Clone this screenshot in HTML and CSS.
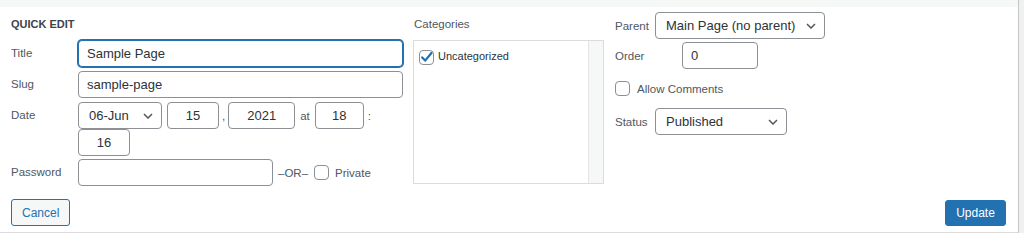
FILE: index.html
```html
<!DOCTYPE html>
<html lang="en">
<head>
  <meta charset="UTF-8">
  <title>Quick Edit</title>
  <link rel="stylesheet" href="styles.css">
</head>
<body>

  <div class="list-table">
    <div class="prev-row"></div>

    <!-- Quick edit row -->
    <div class="quick-edit">
      <div class="columns">

        <div class="col col-left">
          <div class="legend">Quick Edit</div>
          <div class="field">
            <span class="label">Title</span>
            <input type="text" class="text w-full focused" value="Sample Page">
          </div>
          <div class="field">
            <span class="label">Slug</span>
            <input type="text" class="text w-full" value="sample-page">
          </div>
          <div class="field field-date">
            <span class="label">Date</span>
            <div class="date">
              <select class="select sel-month"><option>06-Jun</option></select>
              <input type="text" class="text num w-day" value="15"><span class="sep comma">,</span>
              <input type="text" class="text num w-year" value="2021"><span class="sep at">at</span>
              <input type="text" class="text num w-hour" value="18"><span class="sep colon">:</span>
              <input type="text" class="text num w-min" value="16">
            </div>
          </div>
          <div class="field">
            <span class="label">Password</span>
            <div class="pass">
              <input type="text" class="text w-pass" value="">
              <span class="sep or">–OR–</span>
              <label class="check"><input type="checkbox" class="cb"><span>Private</span></label>
            </div>
          </div>
        </div>

        <div class="col col-mid">
          <div class="cat-title">Categories</div>
          <div class="cat-box">
            <ul class="cat-list">
              <li><label class="check cat-item"><input type="checkbox" class="cb" checked><span>Uncategorized</span></label></li>
            </ul>
            <div class="scroll-track"></div>
          </div>
        </div>

        <div class="col col-right">
          <div class="rfield">
            <span class="rlabel">Parent</span>
            <select class="select sel-parent"><option>Main Page (no parent)</option></select>
          </div>
          <div class="rfield">
            <span class="rlabel wide">Order</span>
            <input type="text" class="text w-order" value="0">
          </div>
          <label class="check allow"><input type="checkbox" class="cb"><span>Allow Comments</span></label>
          <div class="rfield status">
            <span class="rlabel">Status</span>
            <select class="select sel-status"><option>Published</option></select>
          </div>
        </div>

      </div>

      <div class="actions">
        <button class="btn btn-cancel">Cancel</button>
        <button class="btn btn-primary">Update</button>
      </div>
    </div>
  </div>

</body>
</html>
```

FILE: styles.css
```css
body {
  margin: 0;
  background: #f0f0f1;
  font-family: "Liberation Sans", Arial, sans-serif;
  color: #50575e;
}
.list-table {
  box-sizing: border-box;
  width: 1019px;
  border-right: 1px solid #c3c4c7;
  border-bottom: 1px solid #dcdcde;
}
.prev-row {
  height: 7px;
  background: #f6f7f7;
}
.quick-edit {
  background: #fff;
  padding: 0 12px 6px 11px;
}
.columns {
  display: flex;
  align-items: flex-start;
}
.col-left {
  width: 392px;
  margin: 9px 10px 0 0;
}
.col-mid {
  width: 191px;
  margin: 9px 11px 0 0;
}
.col-right {
  flex: 1;
  margin-top: 5px;
}

.legend {
  font-size: 11px;
  font-weight: bold;
  text-transform: uppercase;
  color: #3c434a;
  line-height: 16px;
  margin-bottom: 8px;
}
.field {
  display: flex;
  align-items: flex-start;
  margin-bottom: 4px;
}
.field-date {
  margin-bottom: 3px;
}
.label {
  flex: none;
  width: 67px;
  font-size: 11.5px;
  line-height: 27px;
}

/* inputs */
.text {
  box-sizing: border-box;
  height: 27px;
  margin: 0;
  padding: 0 8px;
  border: 1px solid #8c8f94;
  border-radius: 4px;
  background: #fff;
  font-family: inherit;
  font-size: 13px;
  color: #2c3338;
  outline: none;
}
.text.focused {
  border-color: #2271b1;
  box-shadow: 0 0 0 1px #2271b1;
}
.w-full { width: 325px; }
.num { text-align: center; padding: 0 4px; }
.w-day { width: 52px; }
.w-year { width: 67px; }
.w-hour { width: 49px; }
.w-min { width: 52px; }
.w-pass { width: 195px; }
.w-order { width: 76px; }

.select {
  box-sizing: border-box;
  height: 27px;
  margin: 0;
  padding: 0 24px 0 10px;
  border: 1px solid #8c8f94;
  border-radius: 4px;
  appearance: none;
  -webkit-appearance: none;
  background: #fff url("data:image/svg+xml,%3Csvg xmlns='http://www.w3.org/2000/svg' viewBox='0 0 10 6'%3E%3Cpath d='M1 1l4 4 4-4' fill='none' stroke='%2350575e' stroke-width='1.5'/%3E%3C/svg%3E") no-repeat right 8px center / 10px 6px;
  font-family: inherit;
  font-size: 13px;
  color: #2c3338;
}
.sel-month { width: 84px; margin-right: 5px; }
.sel-parent { width: 170px; }
.sel-status { width: 132px; }

.date {
  display: flex;
  flex-wrap: wrap;
  align-items: center;
  width: 325px;
}
.sep {
  font-size: 11.5px;
  color: #50575e;
}
.comma { padding: 0 3px; }
.at { padding: 0 5px; }
.colon { padding: 0 4px; }

.pass {
  display: flex;
  align-items: center;
}
.or { margin: 0 6px 0 5px; }

/* checkboxes */
.check {
  display: flex;
  align-items: center;
  font-size: 11.5px;
  color: #50575e;
}
.cb {
  appearance: none;
  -webkit-appearance: none;
  flex: none;
  box-sizing: border-box;
  width: 15px;
  height: 15px;
  margin: 0 6px 0 0;
  border: 1px solid #8c8f94;
  border-radius: 4px;
  background: #fff;
}
.cb:checked {
  background: #fff url("data:image/svg+xml,%3Csvg xmlns='http://www.w3.org/2000/svg' viewBox='0 0 15 15'%3E%3Cpath d='M3.2 7.4L6.2 10.6L12.6 2.8' fill='none' stroke='%232271b1' stroke-width='2.2' stroke-linecap='round' stroke-linejoin='round'/%3E%3C/svg%3E") no-repeat center / 15px 15px;
}

/* categories */
.cat-title {
  font-size: 11.5px;
  line-height: 16px;
  margin: 0 0 8px 1px;
}
.cat-box {
  box-sizing: border-box;
  display: flex;
  height: 144px;
  border: 1px solid #dcdcde;
  background: #fff;
}
.cat-list {
  flex: 1;
  list-style: none;
  margin: 0;
  padding: 9px 5px;
}
.cat-item {
  align-items: flex-start;
  font-size: 11px;
  color: #2c3338;
}
.cat-item .cb { margin-right: 4px; }
.cat-item span { line-height: 13px; }
.scroll-track {
  width: 14px;
  border-left: 1px solid #e5e5e5;
  background: #f6f7f7;
}

/* right column */
.rfield {
  display: flex;
  align-items: center;
  margin-bottom: 3px;
}
.rlabel {
  width: 40px;
  font-size: 11.5px;
}
.rlabel.wide { width: 67px; }
.allow {
  margin: 12px 0 12px 0;
}
.allow .cb { margin-right: 7px; }

/* buttons */
.actions {
  display: flex;
  justify-content: space-between;
  margin-top: 9px;
}
.btn {
  box-sizing: border-box;
  height: 27px;
  padding: 0 10px;
  border-radius: 3px;
  font-family: inherit;
  font-size: 12px;
}
.btn-cancel {
  border: 1px solid #2271b1;
  background: #f6f7f7;
  color: #2271b1;
}
.btn-primary {
  margin-top: 1px;
  height: 26px;
  width: 61px;
  padding: 0;
  border: 1px solid #2271b1;
  background: #2271b1;
  color: #fff;
}
```
